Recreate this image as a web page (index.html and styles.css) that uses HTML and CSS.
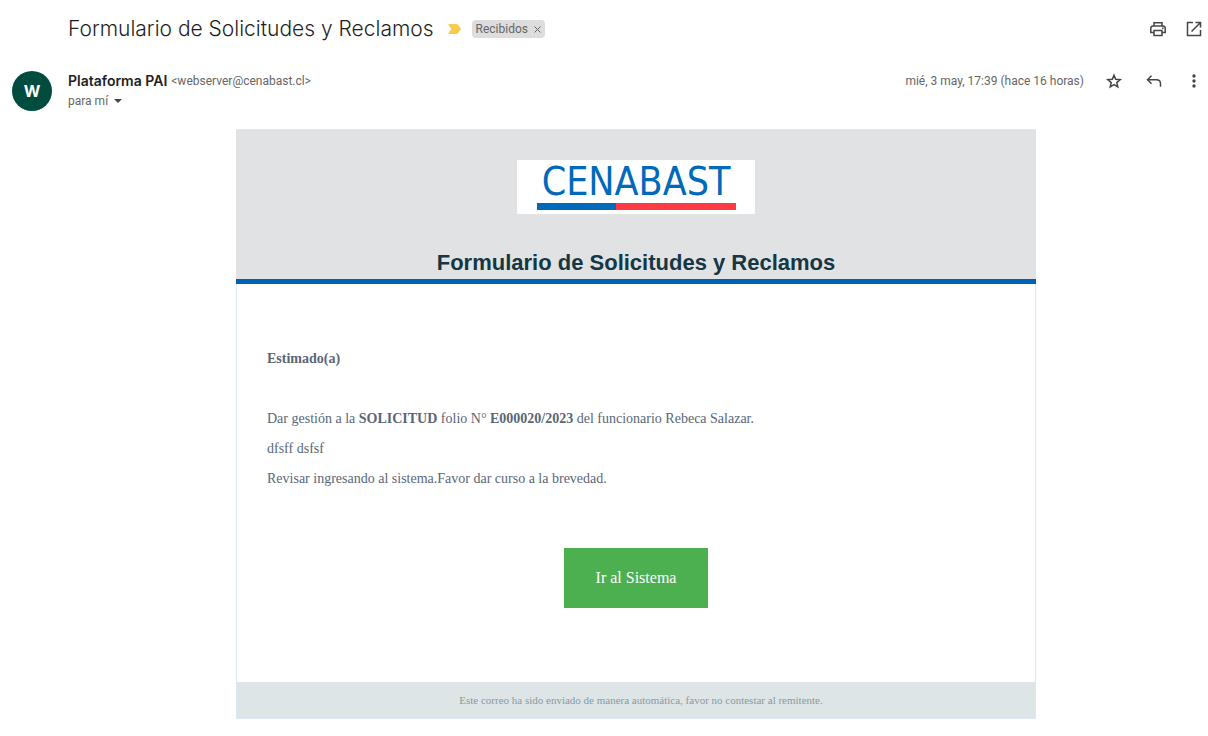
FILE: index.html
```html
<!DOCTYPE html>
<html lang="es">
<head>
<meta charset="utf-8">
<meta name="viewport" content="width=device-width, initial-scale=1">
<title>Formulario de Solicitudes y Reclamos</title>
<link rel="stylesheet" href="styles.css">
</head>
<body>
<main class="message">
  <header class="subject-bar">
    <h1 class="subject">Formulario de Solicitudes y Reclamos</h1>
    <svg class="marker" viewBox="0 0 13 10" aria-hidden="true"><path d="M1 0h7.500q1 0 1.600.8L13 5l-2.900 4.200q-.6.800-1.600.8H1q-1 0-.5-.9L3.500 5 .5.900Q0 0 1 0z"/></svg>
    <span class="label">Recibidos<button class="label-remove" type="button" aria-label="Quitar etiqueta"><svg viewBox="0 0 7 7"><path d="M.5.500l6 6M6.500.500l-6 6"/></svg></button></span>
    <div class="tools">
      <button class="icon-button" type="button" aria-label="Imprimir"><svg viewBox="0 0 20 20"><path d="M6 7V3.700h8V7M5.500 13.500H2.800V9.300Q2.800 7 5.100 7h9.800q2.300 0 2.300 2.300v4.200h-2.700M6 11.500h8v5H6z"/><path class="solid" d="M14 8.500h1.500V10H14z"/></svg></button>
      <button class="icon-button" type="button" aria-label="Abrir en una ventana nueva"><svg viewBox="0 0 20 20"><path d="M9 3.500H3.500v13h13V11M11.500 3.500h5v5M16.500 3.500L7.500 12.500"/></svg></button>
    </div>
  </header>

  <section class="sender-bar">
    <div class="avatar">W</div>
    <div class="sender">
      <div class="sender-line"><strong class="sender-name">Plataforma PAI</strong> <span class="address">&lt;webserver@cenabast.cl&gt;</span></div>
      <button class="recipient" type="button">para mí <svg viewBox="0 0 8 4" aria-hidden="true"><path d="M0 0h8L4 4z"/></svg></button>
    </div>
    <time class="date">mié, 3 may, 17:39 (hace 16 horas)</time>
    <div class="actions">
      <button class="icon-button" type="button" aria-label="Destacar"><svg viewBox="0 0 20 20"><path d="M10 4.200l1.700 4.100 4.500.4-3.400 2.900 1 4.400-3.800-2.300L6.200 16l1-4.400-3.400-2.900 4.500-.4z"/></svg></button>
      <button class="icon-button" type="button" aria-label="Responder"><svg viewBox="0 0 20 20"><path d="M7.500 4.700L3.500 8.700l4 4M3.500 8.700h9q4 0 4 4v3"/></svg></button>
      <button class="icon-button" type="button" aria-label="Más"><svg viewBox="0 0 20 20"><g class="solid"><circle cx="10" cy="5" r="1.700"/><circle cx="10" cy="10" r="1.700"/><circle cx="10" cy="15" r="1.700"/></g></svg></button>
    </div>
  </section>

  <div class="mail-area">
    <article class="mail">
      <header class="mail-header">
        <div class="logo">
          <span class="logo-name">CENABAST</span>
          <span class="logo-line"></span>
        </div>
        <h2 class="mail-title">Formulario de Solicitudes y Reclamos</h2>
      </header>
      <div class="mail-body">
        <p class="greeting"><strong>Estimado(a)</strong></p>
        <p>Dar gestión a la <strong>SOLICITUD</strong> folio N° <strong>E000020/2023</strong> del funcionario Rebeca Salazar.</p>
        <p>dfsff dsfsf</p>
        <p>Revisar ingresando al sistema.Favor dar curso a la brevedad.</p>
        <a class="cta" href="#">Ir al Sistema</a>
      </div>
      <footer class="mail-footer">Este correo ha sido enviado de manera automática, favor no contestar al remitente.</footer>
    </article>
  </div>
</main>
</body>
</html>
```
FILE: styles.css
```css
* { box-sizing: border-box; }

body {
  margin: 0;
  background: #fff;
  color: #202124;
  font-family: Roboto, "Open Sans", sans-serif;
}

h1, h2, p { margin: 0; }

button {
  margin: 0;
  padding: 0;
  border: 0;
  background: none;
  color: inherit;
  font: inherit;
  cursor: pointer;
}

.message { padding: 10px 4px 16px 12px; }

.subject-bar {
  display: flex;
  align-items: center;
  min-height: 38px;
  padding-left: 56px;
}

.subject {
  font-family: Inter, sans-serif;
  font-size: 21px;
  font-weight: 300;
  line-height: 28px;
  color: #1f1f1f;
}

.marker {
  flex: none;
  width: 13px;
  height: 10px;
  margin: 0 11px 0 14px;
  fill: #f7cb4d;
}

.label {
  display: flex;
  align-items: center;
  height: 18px;
  padding: 0 4px;
  border-radius: 4px;
  background: #ddd;
  color: #666;
  font-size: 12px;
}

.label-remove {
  display: flex;
  margin-left: 6px;
}

.label-remove svg {
  width: 7px;
  height: 7px;
  fill: none;
  stroke: #666;
}

.tools, .actions { display: flex; }

.tools {
  gap: 16px;
  margin-left: auto;
}

.actions {
  gap: 20px;
  margin-left: 20px;
}

.icon-button {
  display: flex;
  width: 20px;
  height: 20px;
}

.icon-button svg {
  width: 20px;
  height: 20px;
  fill: none;
  stroke: #444746;
  stroke-width: 1.5;
}

.icon-button .solid {
  fill: #444746;
  stroke: none;
}

.sender-bar {
  display: flex;
  align-items: flex-start;
  padding: 23px 0 18px;
}

.avatar {
  display: flex;
  align-items: center;
  justify-content: center;
  width: 40px;
  height: 40px;
  margin-right: 16px;
  border-radius: 50%;
  background: #004d40;
  color: #fff;
  font-family: Inter, sans-serif;
  font-size: 16px;
  font-weight: 700;
}

.sender {
  flex: 1;
  font-size: 12px;
  line-height: 20px;
  color: #666;
}

.sender-line {
  display: flex;
  gap: 4px;
}

.sender-name {
  font-family: Inter, sans-serif;
  font-size: 14px;
  font-weight: 600;
  color: #1f1f1f;
}

.recipient {
  display: flex;
  align-items: center;
  gap: 6px;
  line-height: 20px;
}

.recipient svg {
  width: 8px;
  height: 4px;
  fill: #444746;
}

.date {
  font-size: 12px;
  line-height: 20px;
  color: #666;
}

.mail-area { padding-left: 56px; }

.mail {
  max-width: 800px;
  margin: 0 auto;
  border: 1px solid #dce9f5;
  font-family: "Liberation Serif", serif;
}

.mail-header {
  display: flex;
  flex-direction: column;
  align-items: center;
  margin: 0 -1px;
  padding-top: 30px;
  border-bottom: 5px solid #0062b2;
  background: #e1e2e4;
}

.logo {
  display: flex;
  flex-direction: column;
  align-items: center;
  width: 238px;
  height: 54px;
  background: #fff;
}

.logo-name {
  font-family: "DejaVu Sans Condensed", "DejaVu Sans", sans-serif;
  font-size: 39px;
  line-height: 43px;
  color: #0069ba;
}

.logo-line {
  width: 199px;
  height: 7px;
  background: linear-gradient(to right, #0069ba 79px, #ff3a44 79px);
}

.mail-title {
  margin-top: 32px;
  font-family: "Liberation Sans", Arial, sans-serif;
  font-size: 22px;
  line-height: 33px;
  color: #153643;
}

.mail-body {
  display: flex;
  flex-direction: column;
  padding: 60px 30px 74px;
  color: #596678;
  font-size: 14px;
  line-height: 30px;
}

.greeting { margin-bottom: 30px; }

.cta {
  align-self: center;
  margin-top: 54px;
  padding: 15px 32px;
  background: #4caf50;
  color: #fff;
  font-size: 16px;
  text-decoration: none;
}

.mail-footer {
  padding: 8px 20px 8px 30px;
  background: #dde5e6;
  color: #8a9a9e;
  font-size: 11px;
  line-height: 20px;
  text-align: center;
}
```
